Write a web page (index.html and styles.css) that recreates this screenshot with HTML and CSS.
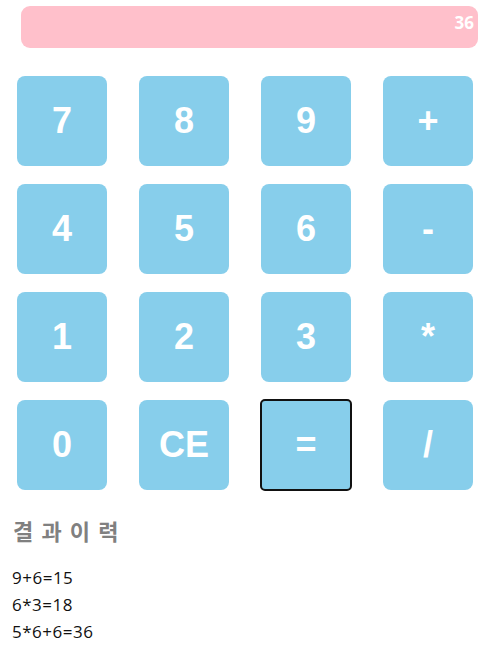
FILE: index.html
```html
<!DOCTYPE html>
<html lang="ko">
<head>
<meta charset="utf-8">
<link rel="stylesheet" href="styles.css">
</head>
<body>
<div class="calc">
  <div class="display">36</div>
  <div class="keys">
    <button class="key">7</button>
    <button class="key">8</button>
    <button class="key">9</button>
    <button class="key">+</button>
    <button class="key">4</button>
    <button class="key">5</button>
    <button class="key">6</button>
    <button class="key">-</button>
    <button class="key">1</button>
    <button class="key">2</button>
    <button class="key">3</button>
    <button class="key">*</button>
    <button class="key">0</button>
    <button class="key">CE</button>
    <button class="key focused">=</button>
    <button class="key">/</button>
  </div>
</div>
<section class="history">
  <h2 class="history-title">결 과 이 력</h2>
  <ul class="history-list">
    <li class="history-item">9+6=15</li>
    <li class="history-item">6*3=18</li>
    <li class="history-item">5*6+6=36</li>
  </ul>
</section>
</body>
</html>
```
FILE: styles.css
```css
html, body {
  margin: 0;
  padding: 0;
  background: #fff;
}
body {
  font-family: "Noto Sans CJK KR", "Noto Sans", sans-serif;
}
.calc {
  padding: 6px 16px 0 17px;
}
.display {
  margin-left: 4px;
  width: 457px;
  height: 42px;
  box-sizing: border-box;
  background: #ffc0cb;
  border-radius: 9px;
  color: #fff;
  font-family: "Noto Sans", sans-serif;
  font-weight: 700;
  font-size: 17px;
  line-height: 20px;
  text-align: right;
  padding: 7px 4px 0 0;
}
.keys {
  margin-top: 28px;
  display: grid;
  grid-template-columns: repeat(4, 90px);
  grid-auto-rows: 90px;
  column-gap: 32px;
  row-gap: 18px;
}
.key {
  border: none;
  margin: 0;
  padding: 0;
  background: #87ceeb;
  border-radius: 8px;
  color: #fff;
  font-family: "Liberation Sans", Arial, sans-serif;
  font-weight: 700;
  font-size: 36px;
}
.key.focused {
  outline: 2px solid #111;
  outline-offset: -1px;
  border-radius: 4px;
}
.history {
  padding: 0 12px;
}
.history-title {
  margin: 25px 0 0 1px;
  font-size: 22px;
  line-height: 30px;
  font-weight: 700;
  word-spacing: 2px;
  color: #808080;
}
.history-list {
  list-style: none;
  margin: 19px 0 0;
  padding: 0;
}
.history-item {
  font-family: "Open Sans", "Noto Sans CJK KR", sans-serif;
  font-size: 17px;
  letter-spacing: 0.5px;
  line-height: 27px;
  color: #111;
}
```
